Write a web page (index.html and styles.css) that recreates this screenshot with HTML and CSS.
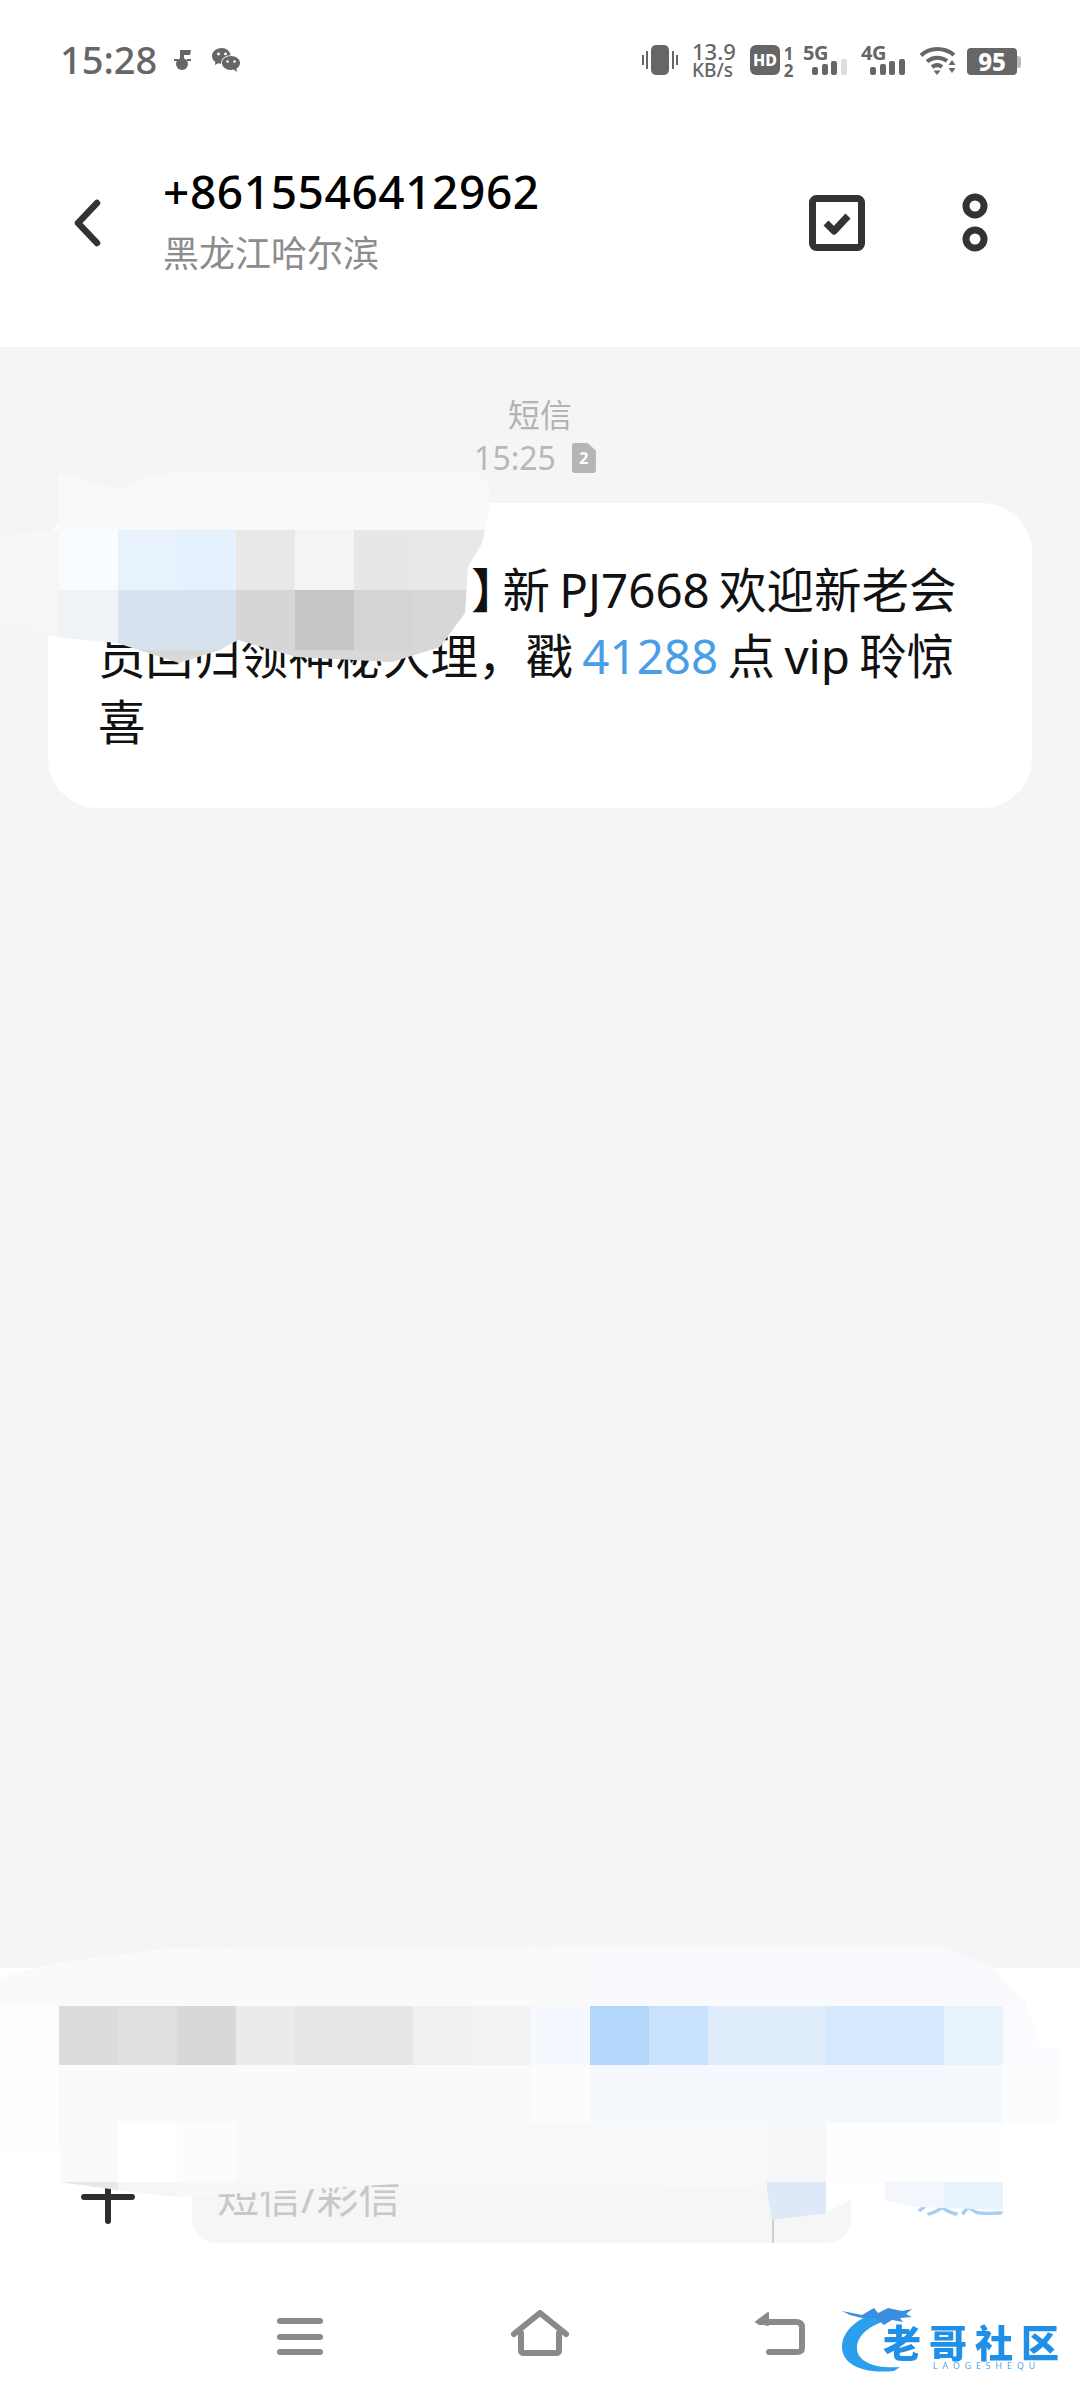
FILE: index.html
```html
<!DOCTYPE html>
<html lang="zh-CN">
<head>
    <meta charset="UTF-8">
    <meta name="viewport" content="width=device-width, initial-scale=1.0">
    <title>短信</title>
    <link rel="stylesheet" href="styles.css">
</head>
<body>
    <div class="app">
        <div class="status-bar">
            <div class="status-left">
                <span class="clock">15:28</span>
                <svg class="ic-note" viewBox="0 0 17 20"><path d="M6 0h11l-1 5h-6v5h-4z"/><circle cx="8" cy="14" r="6"/><rect x="0" y="9" width="4" height="2"/><rect x="13" y="9" width="4" height="2"/></svg>
                <svg class="ic-wechat" viewBox="0 0 28 25"><path d="M10 0C4.500 0 0 3.500 0 8c0 2.500 1.300 4.500 3.400 6l-.6 3 3.400-1.700c1 .3 2 .4 3 .4-.3-4.700 3.700-8.500 9.500-8.500C17.700 3 14.200 0 10 0z"/><path d="M19 8c-5 0-9 3-9 7s4 7 9 7c1 0 1.800-.1 2.600-.4L25 24l-.6-3.300C26.600 19.400 28 17.400 28 15c0-4-4-7-9-7z"/><circle class="hole" cx="6.500" cy="6" r="1.400"/><circle class="hole" cx="13.500" cy="6" r="1.400"/><circle class="hole" cx="15.500" cy="13.500" r="1.300"/><circle class="hole" cx="22.500" cy="13.500" r="1.300"/></svg>
            </div>
            <div class="status-right">
                <svg class="ic-vibrate" viewBox="0 0 36 30"><rect x="9" y="0" width="18" height="30" rx="5"/><rect x="0" y="10" width="2" height="10"/><rect x="4" y="6" width="2" height="18"/><rect x="30" y="6" width="2" height="18"/><rect x="34" y="10" width="2" height="10"/></svg>
                <div class="speed"><span>13.9</span><span class="speed-unit">KB/s</span></div>
                <div class="hd"><span class="hd-box">HD</span><span class="hd-nums"><span>1</span><span>2</span></span></div>
                <div class="signal">
                    <span class="net">5G</span>
                    <svg class="bars" viewBox="0 0 36 16"><rect x="0" y="8" width="6" height="8" rx="2"/><rect x="10" y="5" width="6" height="11" rx="2"/><rect x="19" y="2" width="6" height="14" rx="2"/><rect class="bar-off" x="29" y="0" width="6" height="16" rx="2"/></svg>
                </div>
                <div class="signal">
                    <span class="net">4G</span>
                    <svg class="bars" viewBox="0 0 36 16"><rect x="0" y="8" width="6" height="8" rx="2"/><rect x="10" y="5" width="6" height="11" rx="2"/><rect x="19" y="2" width="6" height="14" rx="2"/><rect x="29" y="0" width="6" height="16" rx="2"/></svg>
                </div>
                <svg class="ic-wifi" viewBox="0 0 38 29"><path class="wifi-line" d="M2 9.500C11 1 25 1 35 9"/><path class="wifi-line" d="M8 15.500C14 10.500 22 10.500 28 15"/><path class="wifi-line" d="M13 21c3.500-2.500 7-2.500 10 0"/><path d="M14.500 24.500h7L18 29z"/><path d="M33 14l3.500 5h-7zM29.500 22h7L33 27z"/></svg>
                <div class="battery"><span class="battery-body">95</span><span class="battery-tip"></span></div>
            </div>
        </div>

        <div class="header">
            <svg class="ic-back" viewBox="0 0 28 48"><path d="M24 4L5 24l19 20"/></svg>
            <div class="contact">
                <div class="contact-number">+8615546412962</div>
                <div class="contact-place">黑龙江哈尔滨</div>
            </div>
            <svg class="ic-select" viewBox="0 0 56 56"><rect x="3.500" y="3.500" width="49" height="49" rx="4"/><path d="M17 28l8 8 14-15"/></svg>
            <svg class="ic-more" viewBox="0 0 26 59"><circle cx="13" cy="13" r="9"/><circle cx="13" cy="46" r="9"/></svg>
        </div>

        <div class="conversation">
            <div class="msg-kind">短信</div>
            <div class="msg-time">
                <span>15:25</span>
                <span class="sim-badge">2</span>
            </div>
            <div class="bubble">
                <span class="line"><span class="line-masked"></span><span class="bracket">】</span>新 PJ7668 欢迎新老会</span>
                <span class="line">员回归领神秘大理，戳 <span class="num-link">41288</span> 点 vip 聆惊</span>
                <span class="line">喜</span>
            </div>
        </div>

        <div class="composer">
            <svg class="ic-plus" viewBox="0 0 54 54"><path d="M3 27h48M27 3v48"/></svg>
            <div class="input-box">
                <span class="placeholder">短信/彩信</span>
                <span class="input-rule"></span>
            </div>
            <span class="send">发送</span>
        </div>

        <div class="nav-bar">
            <svg class="nav-icon" viewBox="0 0 60 48"><path d="M10 11h40M10 27h40M10 42h40"/></svg>
            <svg class="nav-icon" viewBox="0 0 60 48"><path d="M4 24L30 3l26 21M11 23v17c0 2 1 3 3 3h32c2 0 3-1 3-3V23"/></svg>
            <svg class="nav-icon" viewBox="0 0 60 48"><path d="M10 12h36c4 0 6 2 6 5v21c0 3-2 4-5 4H19"/><path class="nav-head" d="M18 3L6 12l12 3z"/></svg>
        </div>

        <!-- mosaic patches over the message and the composer -->
        <svg class="mosaic mosaic-top" viewBox="0 470 500 200">
            <defs>
                <clipPath id="clip-top">
                    <path d="M58 473L120 490L148 477L175 472H475L489 483V513L482 543L468 567L465 613L440 647L392 662L296 657L238 640L220 650L179 663L117 643L55 637L0 623V535L58 530Z"/>
                </clipPath>
            </defs>
            <g clip-path="url(#clip-top)">
                <rect x="0" y="470" width="500" height="60" fill="#f9f9f9"/>
                <rect x="0" y="530" width="59" height="60" fill="#f7f7f7"/>
                <rect x="59" y="530" width="59" height="60" fill="#f8fbff"/>
                <rect x="118" y="530" width="59" height="60" fill="#e8f2fd"/>
                <rect x="177" y="530" width="59" height="60" fill="#e6f1fe"/>
                <rect x="236" y="530" width="59" height="60" fill="#e8e8e8"/>
                <rect x="295" y="530" width="59" height="60" fill="#f4f4f4"/>
                <rect x="354" y="530" width="59" height="60" fill="#e7e7e7"/>
                <rect x="413" y="530" width="87" height="60" fill="#e8e8e8"/>
                <rect x="0" y="590" width="59" height="60" fill="#f6f6f7"/>
                <rect x="59" y="590" width="59" height="60" fill="#eef3f8"/>
                <rect x="118" y="590" width="59" height="60" fill="#d6e2ed"/>
                <rect x="177" y="590" width="59" height="60" fill="#d6e2ed"/>
                <rect x="236" y="590" width="59" height="60" fill="#d6d6d6"/>
                <rect x="295" y="590" width="59" height="60" fill="#c6c6c6"/>
                <rect x="354" y="590" width="59" height="60" fill="#d4d4d4"/>
                <rect x="413" y="590" width="87" height="60" fill="#d7d7d7"/>
                <rect x="0" y="650" width="500" height="20" fill="#d8d8d8"/>
            </g>
        </svg>

        <svg class="mosaic mosaic-bottom" viewBox="0 1940 1080 290">
            <defs>
                <clipPath id="clip-bottom">
                    <path d="M0 1978L55 1963L172 1948L585 1947H943L992 1967L1026 2003L1040 2047L1060 2048V2123H1003V2210L916 2207L871 2197L850 2200L826 2213L772 2220L767 2190L560 2183H413L177 2197L117 2190L60 2182V2150H0Z"/>
                </clipPath>
            </defs>
            <g clip-path="url(#clip-bottom)">
                <rect x="0" y="1940" width="585" height="66" fill="#fafafa"/>
                <rect x="585" y="1940" width="495" height="66" fill="#f8fafd"/>
                <rect x="0" y="2006" width="59" height="59" fill="#fefefe"/>
                <rect x="59" y="2006" width="59" height="59" fill="#dcdcdc"/>
                <rect x="118" y="2006" width="59" height="59" fill="#dfdfdf"/>
                <rect x="177" y="2006" width="59" height="59" fill="#d8d8d8"/>
                <rect x="236" y="2006" width="59" height="59" fill="#ebebeb"/>
                <rect x="295" y="2006" width="118" height="59" fill="#e6e6e6"/>
                <rect x="413" y="2006" width="59" height="59" fill="#f0f0f0"/>
                <rect x="472" y="2006" width="59" height="59" fill="#f3f3f3"/>
                <rect x="531" y="2006" width="59" height="59" fill="#f5f8fe"/>
                <rect x="590" y="2006" width="59" height="59" fill="#b3d6fb"/>
                <rect x="649" y="2006" width="59" height="59" fill="#c9e2fb"/>
                <rect x="708" y="2006" width="118" height="59" fill="#deecfc"/>
                <rect x="826" y="2006" width="118" height="59" fill="#d6e8fb"/>
                <rect x="944" y="2006" width="59" height="59" fill="#e9f3fd"/>
                <rect x="1003" y="2006" width="77" height="59" fill="#fafcff"/>
                <rect x="0" y="2065" width="59" height="58" fill="#fefefe"/>
                <rect x="59" y="2065" width="472" height="58" fill="#fafafa"/>
                <rect x="531" y="2065" width="59" height="58" fill="#fcfcfd"/>
                <rect x="590" y="2065" width="413" height="58" fill="#f5f9fe"/>
                <rect x="1003" y="2065" width="77" height="58" fill="#fafcfe"/>
                <rect x="0" y="2123" width="59" height="59" fill="#fefefe"/>
                <rect x="59" y="2123" width="59" height="59" fill="#fafafa"/>
                <rect x="118" y="2123" width="59" height="59" fill="#ffffff"/>
                <rect x="177" y="2123" width="59" height="59" fill="#fcfcfc"/>
                <rect x="236" y="2123" width="531" height="59" fill="#f9f9f9"/>
                <rect x="767" y="2123" width="59" height="59" fill="#f6f7f8"/>
                <rect x="826" y="2123" width="254" height="59" fill="#fefefe"/>
                <rect x="0" y="2182" width="118" height="48" fill="#e8e8e8"/>
                <rect x="118" y="2182" width="59" height="48" fill="#f6f6f6"/>
                <rect x="177" y="2182" width="590" height="48" fill="#f8f8f8"/>
                <rect x="767" y="2182" width="59" height="48" fill="#dde9f7"/>
                <rect x="826" y="2182" width="59" height="48" fill="#ffffff"/>
                <rect x="885" y="2182" width="59" height="48" fill="#f3f7fd"/>
                <rect x="944" y="2182" width="136" height="48" fill="#e9f3fd"/>
            </g>
        </svg>

        <div class="watermark">
            <svg class="dragon" viewBox="0 0 100 70">
                <path fill="#2c9eee" d="M32 9C14 14 0 27 0 42c0 18 22 27 52 24l6-4C36 64 15 58 15 43 15 31 26 22 42 16z"/>
                <path fill="#3a8fdc" d="M0 6l20 4 12-7 4 5 10-5 14 3 10-2-6 5 6 3-12 1 3 4-11-2-8 5-8-7-14 0-12-3z"/>
            </svg>
            <span class="wm-name">老哥社区</span>
            <span class="wm-pinyin">LAOGESHEQU</span>
        </div>
    </div>
</body>
</html>
```

FILE: styles.css
```css
* {
    box-sizing: border-box;
}
body {
    margin: 0;
    background: white;
    font-family: "Noto Sans", "Noto Sans CJK SC", sans-serif;
}
.app {
    position: relative;
    width: 1080px;
    height: 2400px;
    overflow: hidden;
    display: flex;
    flex-direction: column;
    background: white;
}

/* status bar */
.status-bar {
    height: 120px;
    flex-shrink: 0;
    display: flex;
    justify-content: space-between;
    align-items: flex-start;
    padding: 40px 60px 0;
    color: #666;
    fill: #666;
}
.status-left {
    display: flex;
    align-items: center;
    height: 40px;
}
.clock {
    width: 114px;
    margin-top: -2px;
    font-size: 38px;
    font-weight: 500;
    line-height: 40px;
}
.ic-note {
    width: 17px;
    height: 20px;
    margin-right: 21px;
}
.ic-wechat {
    width: 28px;
    height: 25px;
}
.ic-wechat .hole {
    fill: white;
}
.status-right {
    display: flex;
    align-items: flex-start;
    margin-top: 2px;
    margin-right: -1px;
}
.ic-vibrate {
    width: 36px;
    height: 30px;
    margin-top: 3px;
    margin-right: 14px;
}
.speed {
    width: 58px;
    display: flex;
    flex-direction: column;
    font-size: 22px;
    font-weight: 500;
    line-height: 19px;
}
.speed-unit {
    font-size: 19px;
}
.hd {
    display: flex;
    margin-top: 3px;
    margin-right: 8px;
}
.hd-box {
    width: 30px;
    height: 30px;
    border-radius: 6px;
    background: #666;
    color: white;
    font-size: 16px;
    font-weight: 800;
    line-height: 30px;
    text-align: center;
}
.hd-nums {
    display: flex;
    flex-direction: column;
    width: 13px;
    margin-left: 2px;
    font-size: 17px;
    font-weight: 700;
    line-height: 17px;
    text-align: center;
}
.signal {
    width: 58px;
    position: relative;
    height: 32px;
}
.net {
    display: block;
    margin-top: 1px;
    font-size: 20px;
    font-weight: 700;
    line-height: 20px;
    letter-spacing: -0.5px;
}
.bars {
    position: absolute;
    left: 9px;
    top: 17px;
    width: 36px;
    height: 16px;
}
.bar-off {
    fill: #ddd;
}
.ic-wifi {
    width: 38px;
    height: 29px;
    margin-top: 4px;
    margin-right: 10px;
}
.wifi-line {
    fill: none;
    stroke: #666;
    stroke-width: 4px;
}
.battery {
    display: flex;
    align-items: center;
    margin-top: 6px;
}
.battery-body {
    width: 50px;
    height: 27px;
    border-radius: 4px;
    background: #666;
    color: white;
    font-size: 24px;
    font-weight: 800;
    line-height: 27px;
    text-align: center;
}
.battery-tip {
    width: 4px;
    height: 12px;
    border-radius: 0 3px 3px 0;
    background: #bbb;
}

/* header */
.header {
    height: 227px;
    flex-shrink: 0;
    display: flex;
    align-items: center;
    padding: 0 92px 22px 73px;
}
.ic-back {
    width: 28px;
    height: 48px;
    margin-right: 62px;
    fill: none;
    stroke: #333;
    stroke-width: 6.5px;
    stroke-linecap: round;
    stroke-linejoin: round;
}
.contact {
    flex: 1;
    margin-top: -3px;
}
.contact-number {
    font-size: 46px;
    font-weight: 500;
    line-height: 66px;
    letter-spacing: 0.6px;
    color: #000;
}
.contact-place {
    font-size: 36px;
    line-height: 60px;
    color: #8c8c8c;
}
.ic-select {
    width: 56px;
    height: 56px;
    margin-right: 97px;
    fill: none;
    stroke: #333;
    stroke-width: 7px;
    stroke-linejoin: round;
}
.ic-more {
    width: 26px;
    height: 59px;
    fill: none;
    stroke: #333;
    stroke-width: 7px;
}

/* messages */
.conversation {
    flex: 1;
    background: #f5f5f5;
    padding: 48px 48px 0;
}
.msg-kind {
    font-size: 32px;
    line-height: 40px;
    text-align: center;
    color: #b3b3b3;
}
.msg-time {
    display: flex;
    justify-content: center;
    align-items: center;
    gap: 16px;
    margin-top: 3px;
    padding-right: 10px;
    font-size: 32px;
    line-height: 40px;
    color: #b8b8b8;
}
.sim-badge {
    width: 24px;
    height: 30px;
    border-radius: 3px;
    background: #b5b5b5;
    clip-path: polygon(0 0, 65% 0, 100% 25%, 100% 100%, 0 100%);
    color: white;
    font-size: 16px;
    font-weight: 700;
    line-height: 30px;
    text-align: center;
}
.bubble {
    margin-top: 25px;
    padding: 54px 50px 53px;
    border-radius: 50px;
    background: white;
    font-size: 47.5px;
    line-height: 66px;
    word-spacing: -3px;
    color: #111;
}
.line {
    display: block;
    white-space: nowrap;
}
.line-masked {
    display: inline-block;
    width: 373px;
}
.bracket {
    letter-spacing: -16px;
}
.num-link {
    color: #4a9ee6;
}

/* composer */
.composer {
    height: 292px;
    flex-shrink: 0;
    display: flex;
    align-items: center;
    padding: 182px 0 17px 81px;
}
.ic-plus {
    width: 54px;
    height: 54px;
    margin-right: 57px;
    fill: none;
    stroke: #2e2e2e;
    stroke-width: 6px;
    stroke-linecap: round;
}
.input-box {
    position: relative;
    width: 659px;
    height: 93px;
    display: flex;
    align-items: center;
    padding: 0 0 5px 25px;
    border-radius: 24px;
    background: #f6f6f6;
}
.placeholder {
    font-size: 42px;
    color: #c8c8c8;
}
.input-rule {
    position: absolute;
    left: 580px;
    bottom: 0;
    width: 2px;
    height: 30px;
    background: #d0d0d0;
}
.send {
    margin-left: 65px;
    margin-bottom: 8px;
    font-size: 44px;
    color: #a9cdf2;
}

/* navigation */
.nav-bar {
    height: 140px;
    flex-shrink: 0;
    display: flex;
    justify-content: center;
    gap: 180px;
    padding-top: 50px;
}
.nav-icon {
    width: 60px;
    height: 48px;
    fill: none;
    stroke: #8a8a8a;
    stroke-width: 6px;
    stroke-linecap: round;
    stroke-linejoin: round;
}
.nav-head {
    fill: #8a8a8a;
    stroke-width: 2px;
}

/* overlays */
.mosaic {
    position: absolute;
    left: 0;
}
.mosaic-top {
    top: 470px;
    width: 500px;
    height: 200px;
}
.mosaic-bottom {
    top: 1940px;
    width: 1080px;
    height: 290px;
}
.watermark {
    position: absolute;
    left: 842px;
    top: 2300px;
    width: 225px;
    height: 75px;
    filter: blur(0.7px);
}
.dragon {
    position: absolute;
    left: 0;
    top: 5px;
    width: 100px;
    height: 70px;
}
.wm-name {
    position: absolute;
    left: 41px;
    top: 27px;
    font-size: 38px;
    font-weight: 900;
    line-height: 30px;
    white-space: nowrap;
    letter-spacing: 8px;
    color: #1f8fe8;
}
.wm-pinyin {
    position: absolute;
    left: 91px;
    top: 61px;
    font-size: 9px;
    line-height: 10px;
    letter-spacing: 4.8px;
    white-space: nowrap;
    color: #5aa6e6;
}
```
